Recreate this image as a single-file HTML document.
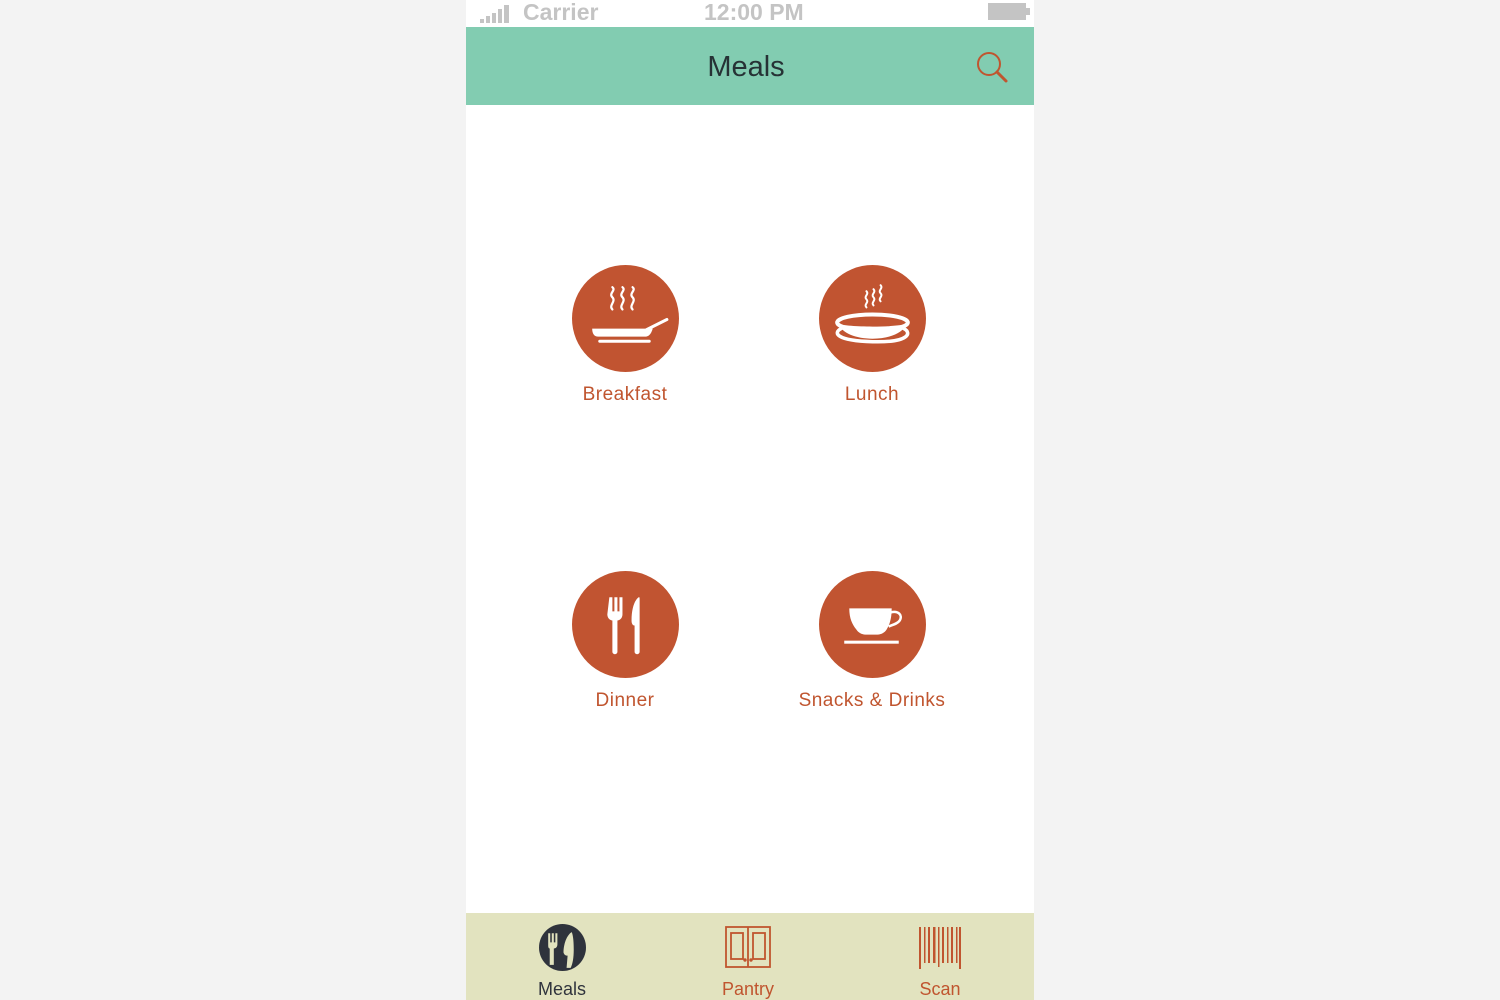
<!DOCTYPE html>
<html><head><meta charset="utf-8"><style>
*{margin:0;padding:0;box-sizing:border-box}
body{width:1500px;height:1000px;background:#f3f3f3;position:relative;overflow:hidden;font-family:"Liberation Sans",sans-serif}
#phone{position:absolute;left:466px;top:0;width:568px;height:1000px;background:#fff}
.status{position:absolute;top:0;left:0;width:568px;height:27px;color:#c4c4c4;font-size:23px;font-weight:bold}
.hdr{position:absolute;top:27px;left:0;width:568px;height:78px;background:#82ccb1}
.hdr .t{position:absolute;left:-4px;width:100%;text-align:center;top:24px;font-size:29px;color:#263235}
.item{position:absolute;width:200px;text-align:center;color:#c0552f;font-size:19px;letter-spacing:.5px}
.item svg{display:block;margin:0 auto 12px}
.tab{position:absolute;bottom:0;left:0;width:568px;height:87px;background:#e2e3bf}
.tl{position:absolute;top:66px;font-size:18px;width:100px;text-align:center}
</style></head><body>
<div id="phone">
<div class="status">
 <svg style="position:absolute;left:14px;top:3px" width="34" height="20"><rect x="0" y="16" width="4" height="4" fill="#c4c4c4"/><rect x="6" y="13" width="4" height="7" fill="#c4c4c4"/><rect x="12" y="10" width="4" height="10" fill="#c4c4c4"/><rect x="18" y="6" width="4" height="14" fill="#c4c4c4"/><rect x="24" y="2" width="5" height="18" fill="#c4c4c4"/></svg>
 <span style="position:absolute;left:57px;top:-1px">Carrier</span>
 <span style="position:absolute;left:238px;top:-1px">12:00 PM</span>
 <svg style="position:absolute;left:522px;top:3px" width="44" height="18"><rect x="0" y="0" width="38" height="17" fill="#c4c4c4"/><rect x="38" y="5" width="4" height="7" fill="#c4c4c4"/></svg>
</div>
<div class="hdr"><div class="t">Meals</div>
 <svg style="position:absolute;left:508px;top:22px" width="36" height="36"><circle cx="15" cy="15" r="11" fill="none" stroke="#c0552f" stroke-width="2"/><line x1="23" y1="23" x2="32" y2="32" stroke="#c0552f" stroke-width="3" stroke-linecap="round"/></svg>
</div>

<div class="item" style="left:59px;top:265px">
<svg width="107" height="107" viewBox="0 0 106 106"><circle cx="53" cy="53" r="53" fill="#c15431"/>
<g fill="none" stroke="#fff" stroke-width="2.2" stroke-linecap="round">
<path d="M40 44c-4-4 4-8 0-12s4-7 0-10"/><path d="M50 44c-4-4 4-8 0-12s4-7 0-10"/><path d="M60 44c-4-4 4-8 0-12s4-7 0-10"/>
<path d="M74 64l20-10" stroke-width="3"/></g>
<path d="M20 63h60c-2 6-4 8-8 8H26c-4 0-6-3-6-8z" fill="#fff"/>
<rect x="26" y="74" width="52" height="3" rx="1.5" fill="#fff"/></svg>
Breakfast</div>

<div class="item" style="left:306px;top:265px">
<svg width="107" height="107" viewBox="0 0 106 106"><circle cx="53" cy="53" r="53" fill="#c15431"/>
<g fill="none" stroke="#fff" stroke-width="2" stroke-linecap="round">
<path d="M47 42c-3-3 3-5 0-8s3-5 0-8"/><path d="M54 40c-3-3 3-5 0-8s3-5 0-8"/><path d="M61 36c-3-3 3-5 0-8s3-5 0-8"/>
<ellipse cx="53" cy="57" rx="35" ry="8" stroke-width="4"/>
<path d="M22 63c-8 4-6 12 31 13s39-9 31-13" stroke-width="3.5"/></g>
<path d="M19 58c8 4 60 4 68 0c-4 10-18 15-34 15s-30-5-34-15z" fill="#fff"/></svg>
Lunch</div>

<div class="item" style="left:59px;top:571px">
<svg width="107" height="107" viewBox="0 0 106 106"><circle cx="53" cy="53" r="53" fill="#c15431"/>
<path d="M37 26h3v14h2V26h3v14h2V26h3v17c0 4-3 6-5 6v31a2.5 2.5 0 0 1-5 0V49c-2 0-5-2-5-6z" fill="#fff"/>
<path d="M66 26c-4 3-7 11-7 23 0 3 1 5 3 5v26a2.5 2.5 0 0 0 5 0V28c0-2 0-2-1-2z" fill="#fff"/></svg>
Dinner</div>

<div class="item" style="left:306px;top:571px">
<svg width="107" height="107" viewBox="0 0 106 106"><circle cx="53" cy="53" r="53" fill="#c15431"/>
<path d="M30 37h42c0 10-2 16-5 21-2 3-5 5-9 5H46c-4 0-7-2-9-5-4-5-7-11-7-21z" fill="#fff"/>
<path d="M71 41c8-2 12 3 9 8-2 3-6 4-11 6" fill="none" stroke="#fff" stroke-width="2.5"/>
<rect x="25" y="69" width="54" height="3" fill="#fff"/></svg>
Snacks &amp; Drinks</div>

<div class="tab">
 <svg style="position:absolute;left:73px;top:11px" width="47" height="47" viewBox="0 0 46 46"><circle cx="23" cy="23" r="23" fill="#2f333c"/>
 <path d="M9 9h2v9h1.5V9h2v9H16V9h2v11c0 3-2 4-3.5 4v16h-4V24C9 24 9 22 9 20z" fill="#e2e3bf"/>
 <path d="M32 8c-5 3-8 12-8 20 1 3 3 3 4 3l-1 12h4c2-4 3-10 3-18 0-10-1-15-2-17z" fill="#e2e3bf"/></svg>
 <div class="tl" style="left:46px;color:#2f333c">Meals</div>
 <svg style="position:absolute;left:259px;top:13px" width="46" height="42" viewBox="0 0 46 42" fill="none" stroke="#c0552f" stroke-width="1.8"><rect x="1" y="1" width="44" height="40"/><line x1="23" y1="1" x2="23" y2="41"/><rect x="6" y="7" width="12" height="26"/><rect x="28" y="7" width="12" height="26"/><circle cx="20" cy="34" r=".8" fill="#c0552f"/><circle cx="26" cy="34" r=".8" fill="#c0552f"/></svg>
 <div class="tl" style="left:232px;color:#c0552f">Pantry</div>
 <svg style="position:absolute;left:452px;top:14px" width="44" height="42" fill="#c0552f"><rect x="1" y="0" width="2" height="42"/><rect x="6" y="0" width="1.5" height="36"/><rect x="10" y="0" width="2" height="36"/><rect x="15" y="0" width="2.5" height="36"/><rect x="20" y="0" width="1.5" height="40"/><rect x="24" y="0" width="2" height="36"/><rect x="29" y="0" width="1.5" height="36"/><rect x="33" y="0" width="2" height="36"/><rect x="38" y="0" width="1.5" height="36"/><rect x="41" y="0" width="2" height="42"/></svg>
 <div class="tl" style="left:424px;color:#c0552f">Scan</div>
</div>
</div>
</body></html>
